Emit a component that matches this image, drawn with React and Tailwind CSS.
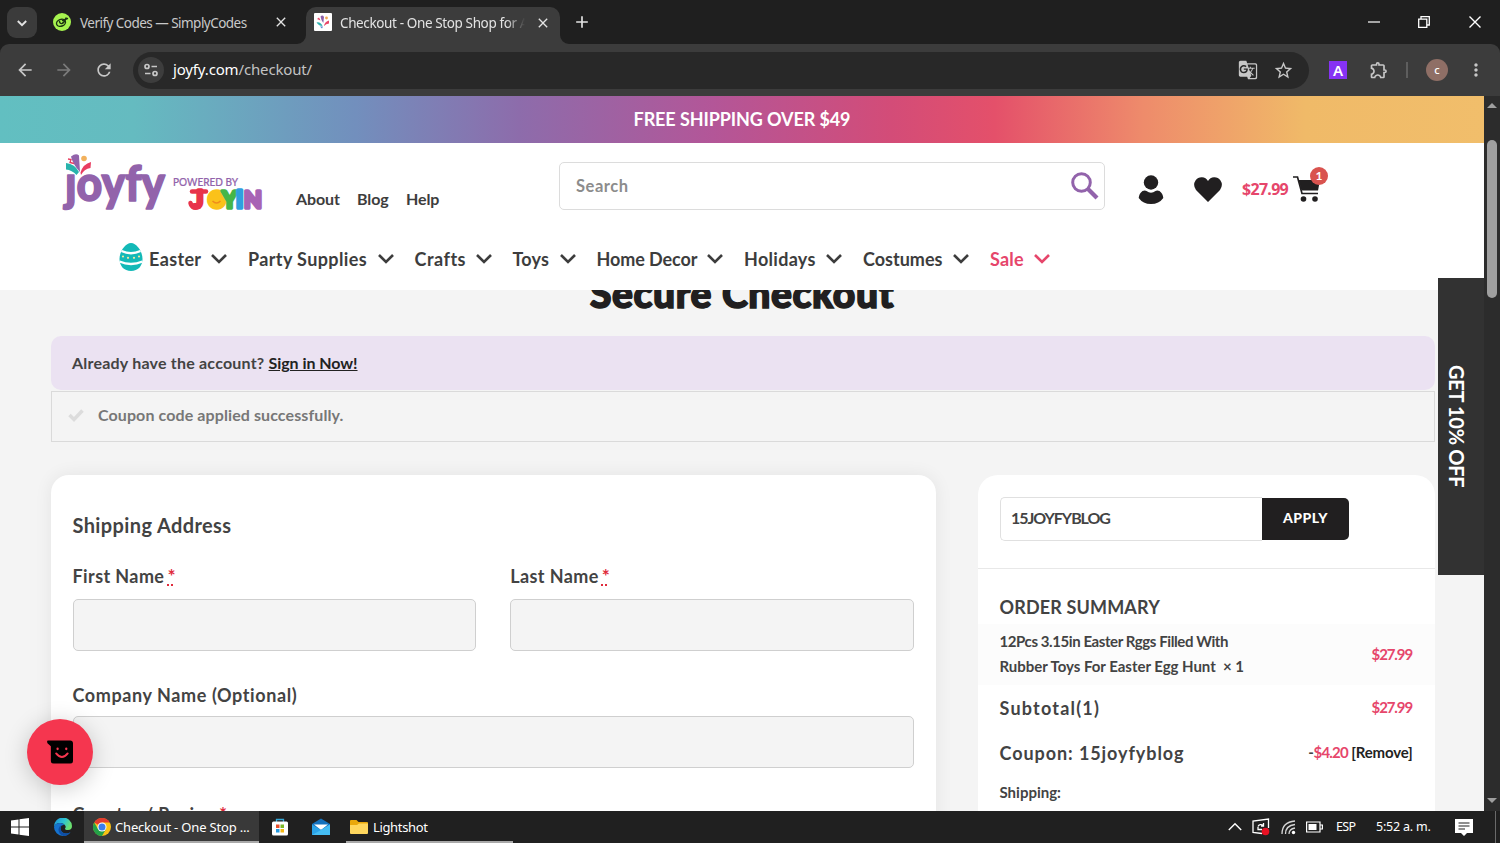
import React from 'react';
import {
  MdArrowBack,
  MdArrowForward,
  MdRefresh,
  MdGTranslate,
  MdStarBorder,
  MdOutlineExtension,
  MdMoreVert,
  MdClose,
  MdAdd,
} from 'react-icons/md';

const menuItems = [
  { label: 'Easter', width: 'w-[52px] tracking-[0.35px]' },
  { label: 'Party Supplies', width: 'w-[119.5px] tracking-[0.38px]' },
  { label: 'Crafts', width: 'w-[51px] tracking-[0.5px]' },
  { label: 'Toys', width: 'w-[37px] tracking-[0.2px]' },
  { label: 'Home Decor', width: 'w-[100.5px] tracking-[-0.1px]' },
  { label: 'Holidays', width: 'w-[72px] tracking-[0.3px]' },
  { label: 'Costumes', width: 'w-[80px]' },
  { label: 'Sale', width: 'w-[34px] tracking-[0.2px]', sale: true },
];

const Chevron = () => (
  <svg className="w-4 h-4" viewBox="0 0 16 16" fill="none" stroke="currentColor" strokeWidth="2.6"><path d="M1 4L8 11L15 4" /></svg>
);

const SimplyCodesIcon = () => (
  <svg className="w-[18px] h-[18px]" viewBox="0 0 18 18">
    <circle cx="9" cy="9" r="9" fill="#a6f34f" />
    <g fill="none" stroke="#1c3312" strokeWidth="1.4" strokeLinecap="round">
      <ellipse cx="8" cy="9.8" rx="4.6" ry="3.4" transform="rotate(-20 8 9.8)" />
      <path d="M6.500 8.500Q7 11 9 10.500Q11.500 9.500 13 5M9.500 7.500L14.500 5.500" />
    </g>
  </svg>
);

const JoyfyFavicon = () => (
  <svg className="w-[18px] h-[18px]" viewBox="0 0 18 18">
    <rect width="18" height="18" rx="1" fill="#fff" />
    <path d="M6.500 3.500Q8.500 1.500 10 4L9.300 10Q7 7 6.500 3.500Z" fill="#8d5fa9" />
    <path d="M2.500 9.500Q6.500 8.500 8.500 13Q5 13 2.500 9.500Z" fill="#2fb3b0" />
    <path d="M10 12.500Q11 8.500 15 7.500L15 10.500Q12 10.500 10 13Z" fill="#e8476a" />
    <path d="M3 6l2-1.500 1.500 3z" fill="#e8476a" />
    <circle cx="12.500" cy="5" r="1.400" fill="#f0a851" />
    <path d="M6 13.500l3 0-1 2z" fill="#4a7fd0" />
  </svg>
);

const TabBar = () => (
  <div className="h-11 flex bg-[#1f1f1f] text-[#e3e3e3] text-[13.5px]">
    <div className="w-[30px] h-[31px] mt-[7px] ml-[7px] rounded-[9px] bg-[#3b3b3b] flex items-center justify-center">
      <svg className="w-3 h-3" viewBox="0 0 12 12" fill="none" stroke="currentColor" strokeWidth="1.9"><path d="M1.8 4L6 8.2L10.2 4" /></svg>
    </div>
    <div className="w-[269px] pl-4 flex items-center">
      <SimplyCodesIcon />
      <span className="ml-[9px] w-[193px] pt-[2px] whitespace-nowrap tracking-[-0.53px] text-[#c9c9c9]">Verify Codes — SimplyCodes</span>
      <MdClose className="w-4 h-4" />
    </div>
    <div className="relative w-[254px] mt-[7px] pl-2 flex items-center rounded-t-[10px] bg-[#3c3c3c]">
      <svg className="absolute -left-[9px] bottom-0 w-[9px] h-[9px]" viewBox="0 0 9 9"><path d="M9 0V9H0A9 9 0 0 0 9 0Z" fill="#3c3c3c" /></svg>
      <svg className="absolute -right-[9px] bottom-0 w-[9px] h-[9px]" viewBox="0 0 9 9"><path d="M0 0V9H9A9 9 0 0 1 0 0Z" fill="#3c3c3c" /></svg>
      <div className="-mt-[7px]"><JoyfyFavicon /></div>
      <div className="ml-2 -mt-[4px] w-[185px] overflow-hidden whitespace-nowrap tracking-[-0.38px] [mask-image:linear-gradient(to_right,black_90%,transparent)]">Checkout - One Stop Shop for A</div>
      <MdClose className="ml-[10px] -mt-[6px] w-4 h-4 shrink-0" />
    </div>
    <div className="ml-3 flex items-center"><MdAdd className="w-5 h-5" /></div>
    <div className="ml-auto mr-[19px] flex items-center gap-[39px] text-white">
      <svg className="w-3 h-3 -mr-[1px]" viewBox="0 0 12 12" stroke="currentColor" strokeWidth="1.2"><path d="M0 6H12" /></svg>
      <svg className="w-3 h-3" viewBox="0 0 12 12" fill="none" stroke="currentColor" strokeWidth="1.3"><path d="M.7 3.2H8.8V11.3H.7ZM3 3V.7H11.3V9H9" /></svg>
      <svg className="w-3 h-3" viewBox="0 0 12 12" stroke="currentColor" strokeWidth="1.4"><path d="M.5 .5L11.5 11.5M11.5 .5L.5 11.5" /></svg>
    </div>
  </div>
);

const Toolbar = () => (
  <div className="h-[52px] bg-[#1f1f1f]">
    <div className="h-full rounded-t-[9px] bg-[#3c3c3c] text-[#c7c7c7] flex items-center">
      <MdArrowBack className="ml-[15px] w-5 h-5" />
      <MdArrowForward className="ml-[19px] w-5 h-5 text-[#7b7b7b]" />
      <MdRefresh className="ml-5 w-5 h-5" />
      <div className="ml-[19px] w-[1176px] h-[37px] rounded-full bg-[#282828] flex items-center pl-[5px] pr-[15px]">
        <div className="w-[26px] h-[26px] rounded-full bg-[#3d3d3d] flex items-center justify-center">
          <svg className="w-4 h-4" viewBox="0 0 16 16" fill="none" stroke="currentColor" strokeWidth="1.7">
            <circle cx="4" cy="4.5" r="2" /><path d="M8.5 4.5H14M2 11.5H7.5" /><circle cx="12" cy="11.5" r="2" />
          </svg>
        </div>
        <div className="ml-[9px] -mt-[1px] text-[15px] tracking-[-0.15px] text-[#c3c3c3]"><span className="text-white">joyfy.com</span>/checkout/</div>
        <MdGTranslate className="ml-auto w-5 h-5" />
        <MdStarBorder className="ml-[15px] w-[21px] h-[21px]" />
      </div>
      <div className="ml-5 w-[18px] h-[18px] bg-[#8632f4] text-white text-[15px] leading-none font-semibold flex items-center justify-center">A</div>
      <MdOutlineExtension className="ml-[22px] w-5 h-5" />
      <div className="ml-[17px] w-[2px] h-4 bg-[#5e5e5e]" />
      <div className="ml-[18px] w-[22px] h-[22px] rounded-full bg-[#8f6f66] text-white text-[11px] font-medium flex items-center justify-center">c</div>
      <MdMoreVert className="ml-[18px] w-5 h-5" />
    </div>
  </div>
);

const Logo = () => (
  <svg className="w-[204px] h-16" viewBox="0 0 204 64">
    <g className="font-['Lato'] font-black" fill="#9263ab">
      <text x="4" y="48" fontSize="49" textLength="100" lengthAdjust="spacingAndGlyphs" stroke="#9263ab" strokeWidth="1.6" strokeLinejoin="round">joyfy</text>
    </g>
    {/* confetti burst takes the place of the dot on the j */}
    <rect x="0" y="0" width="30" height="21" fill="#fff" />
    <path d="M10 3.500Q15 -.5 18 2.500L19 19Q11.500 11 10 3.500Z" fill="#9263ab" />
    <path d="M5 10Q14 11 18 19L15.500 22Q11 17 5 16.500Z" fill="#28b3ac" />
    <path d="M19.500 19.500Q22 11 30 9L29.500 15Q23 16 20 22Z" fill="#e93d60" />
    <circle cx="23" cy="5.500" r="2.800" fill="#f2b15c" />
    <path d="M7 6l3 .5-1 3 4 1" fill="none" stroke="#e93d60" strokeWidth="1.300" />
    <text className="font-['Lato'] font-medium" x="112" y="32.500" fontSize="10.500" textLength="65" lengthAdjust="spacingAndGlyphs" fill="#9263ab" stroke="#9263ab" strokeWidth=".2">POWERED BY</text>
    <text className="font-['Lato'] font-black" y="55" fontSize="24" strokeWidth="3.400" strokeLinejoin="round">
      <tspan x="132" fill="#e8334a" stroke="#e8334a">J</tspan>
      <tspan x="147" fill="#fbc21a" stroke="#fbc21a" fontSize="22">O</tspan>
      <tspan x="161" fill="#45b649" stroke="#45b649" fontSize="23">Y</tspan>
      <tspan x="175" fill="#2f9fe0" stroke="#2f9fe0">I</tspan>
      <tspan x="183" fill="#a763b5" stroke="#a763b5" fontSize="23">N</tspan>
    </text>
    <path d="M129.500 50Q131 56.500 138 54" fill="none" stroke="#e8334a" strokeWidth="4.500" strokeLinecap="round" />
    <path d="M131 38.500H145" stroke="#e8334a" strokeWidth="4.500" strokeLinecap="round" />
    <circle cx="155.500" cy="47" r="6" fill="#fbc21a" />
    <path d="M151.500 48Q155.500 52 159.500 48" fill="none" stroke="#ef8d1c" strokeWidth="1.500" />
  </svg>
);

const SiteHeader = () => (
  <div className="relative z-10 h-[147px] shrink-0 bg-white text-[#3d3d3d] font-bold">
    <div className="h-[90px] pl-[61px] flex items-start">
      <div className="mt-[10px]"><Logo /></div>
      <div className="ml-[31px] mt-[44px] flex text-[16px] leading-6 tracking-[-0.1px]">
        <span className="w-[61px]">About</span>
        <span className="w-[49px]">Blog</span>
        <span>Help</span>
      </div>
      <div className="absolute left-[559px] top-[19px] w-[546px] h-12 border border-[#dcdcdc] rounded-[5px] flex items-center justify-between pl-[16px] pr-[5px]">
        <span className="pt-[1px] text-[16.5px] tracking-[0.55px] text-[#8c8c8c]">Search</span>
        <svg className="w-7 h-7" viewBox="0 0 28 28" fill="none" stroke="#9263ab"><circle cx="10.5" cy="10.5" r="8.8" strokeWidth="3" /><path d="M17 17L26 26" strokeWidth="4.2" /></svg>
      </div>
      <div className="absolute left-[1138px] top-[30px] flex items-center text-[#211f20]">
        <svg className="w-[26px] h-8" viewBox="0 0 26 32" fill="currentColor"><circle cx="13" cy="9.500" r="7.200" /><path d="M4.5 18Q7 17 8.5 18Q13 21.5 17.5 18Q19 17 21.5 18Q25 20.5 25.3 25Q21 31 13 31T.7 25Q1 20.5 4.5 18Z" /></svg>
        <svg className="ml-[30px] w-7 h-[25px]" viewBox="0 0 28 25" fill="currentColor"><path d="M14 25L2 13Q-1.5 8 1.5 3.5Q4 0 8 .2Q12 .5 14 4Q16 .5 20 .2Q24 0 26.5 3.5Q29.500 8 26 13Z" /></svg>
        <span className="ml-5 w-[50px] whitespace-nowrap text-[16px] tracking-[-0.7px] font-['Noto_Sans'] text-[#e6466b]">$27.99</span>
        <span className="relative ml-[1px]">
          <svg className="w-7 h-7" viewBox="0 0 28 28" fill="none" stroke="currentColor">
            <path d="M0 2H4.5L9 18.5H25" strokeWidth="1.7" /><path d="M5.500 5H27L25 15.5H8.500Z" fill="currentColor" stroke="none" />
            <circle cx="10.500" cy="24" r="2.800" fill="currentColor" stroke="none" /><circle cx="22" cy="24" r="2.800" fill="currentColor" stroke="none" />
          </svg>
          <span className="absolute left-[17px] -top-[8px] w-[18px] h-[18px] rounded-full bg-[#d9534f] text-white text-[12px] leading-[18px] text-center">1</span>
        </span>
      </div>
    </div>
    <div className="h-[52px] pl-[119px] flex items-center text-[18px]">
      <svg className="w-6 h-7 mr-[6px] -mt-[4px]" viewBox="0 0 24 28">
        <path d="M12 0C18 0 23.500 9 23.500 16C23.500 23 19 28 12 28S.5 23 .5 16C.5 9 6 0 12 0Z" fill="#13b9b7" />
        <path d="M2.500 8Q12 12.500 21.500 8M.5 18.500Q12 23.500 23.500 18.500" fill="none" stroke="#fff" strokeWidth="2.400" />
        <g fill="#f5e7a0"><circle cx="4" cy="13.500" r="1.100" /><circle cx="9" cy="14.800" r="1.100" /><circle cx="15" cy="14.800" r="1.100" /><circle cx="20" cy="13.500" r="1.100" /></g>
      </svg>
      {menuItems.map((item) => (
        <div key={item.label} className={`flex items-center gap-[10px] mr-[21px] ${item.sale ? 'text-[#e6466b]' : ''}`}>
          <span className={`whitespace-nowrap ${item.width}`}>{item.label}</span>
          <Chevron />
        </div>
      ))}
    </div>
  </div>
);

const Required = () => <span className="ml-[3px] text-[19px] leading-none tracking-[-0.5px] text-[#e02b3c] underline decoration-dotted decoration-2 underline-offset-1">*</span>;

const Field = ({ label, required, labelClass }) => (
  <div className="flex-1">
    <label className={`block h-[25px] text-[18px] whitespace-nowrap ${labelClass}`}>{label}{required && <Required />}</label>
    <div className="mt-[9px] h-[52px] rounded-[5px] border border-[#cfcfcf] bg-[#f4f4f4]" />
  </div>
);

const ShippingForm = () => (
  <div className="w-[885px] h-[400px] pl-[21.5px] pr-[22px] pt-[35px] rounded-t-[18px] bg-white shadow-[0_0_18px_rgba(0,0,0,0.07)]">
    <h3 className="h-[30px] leading-[31px] text-[20px] tracking-[0.38px]">Shipping Address</h3>
    <div className="mt-[25px] flex gap-[34px]">
      <Field label="First Name" labelClass="leading-[23px] tracking-[0.4px]" required />
      <Field label="Last Name" labelClass="leading-[23px] tracking-[0.4px]" required />
    </div>
    <div className="mt-[31px]"><Field label="Company Name (Optional)" labelClass="leading-[26px] tracking-[0.6px]" /></div>
    <label className="mt-[34px] block h-[25px] leading-[25px] text-[18px] tracking-[0.4px]">Country / Region<Required /></label>
  </div>
);

const OrderSummary = () => (
  <div className="w-[457px] h-[400px] rounded-t-[20px] bg-white text-[15px]">
    <div className="h-[94px] pl-[22px] pt-[22px] flex border-b border-[#e8e8e8]">
      <div className="w-[262px] h-11 pl-[10px] pb-[2px] border border-r-0 border-[#e0e0e0] rounded-l-[5px] flex items-center text-[16px] tracking-[-1.05px]">15JOYFYBLOG</div>
      <button className="w-[87px] h-[42px] mt-[1px] pb-[3px] rounded-r-[5px] bg-[#211f20] text-white text-[14px] font-black tracking-[0.5px]">APPLY</button>
    </div>
    <h3 className="h-[55px] pt-[25px] pl-[21.5px] leading-[27px] text-[18px] tracking-[0.15px]">ORDER SUMMARY</h3>
    <div className="h-[61px] pl-[21.5px] pr-[23px] flex items-center justify-between bg-[#fcfcfc]">
      <div className="-mt-[2px] leading-[25px] whitespace-nowrap tracking-[-0.42px]">12Pcs 3.15in Easter Rggs Filled With<br /><span className="tracking-[-0.03px]">Rubber Toys For Easter Egg Hunt &nbsp;× 1</span></div>
      <span className="-mt-[1px] text-[#e6466b] tracking-[-1.1px]">$27.99</span>
    </div>
    <div className="h-[45px] pl-[21.5px] pr-[23px] flex items-center justify-between">
      <span className="pt-[1px] text-[18px] tracking-[1.2px]">Subtotal(1)</span>
      <span className="-mt-[1px] text-[#e6466b] tracking-[-1.1px]">$27.99</span>
    </div>
    <div className="h-[45px] pl-[21.5px] pr-[22.5px] flex items-center justify-between">
      <span className="pt-[1px] text-[18px] tracking-[0.93px]">Coupon: 15joyfyblog</span>
      <span className="-mt-[1px] tracking-[-0.2px]">-<span className="text-[#e6466b] tracking-[-0.8px]">$4.20</span> <span className="text-[#222]">[Remove]</span></span>
    </div>
    <div className="h-[34px] pl-[21.5px] flex items-center">Shipping:</div>
  </div>
);

const CheckoutPage = () => (
  <div className="relative w-[1484px] h-full overflow-hidden flex flex-col bg-[#f4f4f4] font-['Lato',sans-serif] font-bold text-[#434343]">
    <div className="h-[47px] shrink-0 flex items-center justify-center text-white text-[18px] tracking-[-0.1px] bg-[linear-gradient(90deg,#62bfc1_0%,#65bbc0_9%,#728fbd_24%,#8d6cab_35%,#b35698_48%,#d34c78_60%,#e4506a_67%,#ee8b6b_77%,#f0ba68_88%,#f1be6b_100%)]">FREE SHIPPING OVER $49</div>
    <SiteHeader />
    <h1 className="-mt-[22px] h-[52px] shrink-0 text-center text-[39px] leading-[51px] tracking-[0.6px] font-black text-[#211f20] [-webkit-text-stroke:1.6px_#211f20]">Secure Checkout</h1>
    <div className="mt-4 mx-[51px] w-[1384px] shrink-0">
      <div className="h-[54px] pl-[21px] rounded-[10px] bg-[#ebe2f2] flex items-center text-[16px] tracking-[0.21px] whitespace-pre">Already have the account? <span className="text-[#222] tracking-[-0.05px] underline">Sign in Now!</span></div>
      <div className="mt-[1px] h-[51px] pl-[16px] pb-[3px] border border-[#dadada] flex items-center text-[16px] tracking-[0.1px] text-[#777]">
        <svg className="w-4 h-4 mr-[14px]" viewBox="0 0 16 16" fill="none" stroke="#dcdcdc" strokeWidth="3.500"><path d="M1.500 8L6 12.500L14.500 3.500" /></svg>
        Coupon code applied successfully.
      </div>
      <div className="mt-[33px] flex justify-between">
        <ShippingForm />
        <OrderSummary />
      </div>
    </div>

    {/* Floating promo tab */}
    <div className="absolute z-20 right-0 top-[182px] w-[46px] h-[297px] bg-[#323232] text-white text-[20px] tracking-[-0.3px] flex items-center justify-center pr-[9px] [writing-mode:vertical-rl]">GET 10% OFF</div>

    {/* Chat bubble */}
    <div className="absolute z-20 left-[27px] top-[623px] w-[66px] h-[66px] rounded-full bg-[#f5364f] shadow-[0_4px_24px_rgba(0,0,0,0.2)] flex items-center justify-center">
      <svg className="w-[26px] h-6" viewBox="0 0 27 24"><path d="M1 0H24Q27 0 27 3V21Q27 24 24 24H7Q4 24 4 21V6L.5 3Q-.5 0 1 0Z" fill="#000" /><g fill="none" stroke="#f5364f" strokeWidth="2" strokeLinecap="round"><path d="M9.500 13.500Q15.500 21 21.500 13.500" /><path d="M11 8.500V9M20 8.500V9" strokeWidth="2.400" /></g></svg>
    </div>
  </div>
);

const Scrollbar = () => (
  <div className="w-4 h-full bg-[#2c2c2c] flex flex-col items-center">
    <svg className="mt-[7px] w-[10px] h-[5px]" viewBox="0 0 10 5"><path d="M5 0L10 5H0Z" fill="#9f9f9f" /></svg>
    <div className="mt-8 w-[10px] h-[158px] rounded-full bg-[#9f9f9f]" />
    <svg className="mt-auto mb-2 w-[10px] h-[5px]" viewBox="0 0 10 5"><path d="M0 0H10L5 5Z" fill="#9f9f9f" /></svg>
  </div>
);

const Taskbar = () => (
  <div className="h-8 flex items-center bg-[#202020] text-white text-[13px]">
    <svg className="ml-[11px] w-[18px] h-[18px]" viewBox="0 0 18 18" fill="currentColor"><path d="M0 2.500L7.500 1.500V8.500H0ZM8.500 1.300L18 0V8.500H8.500ZM0 9.500H7.500V16.500L0 15.500ZM8.500 9.500H18V18L8.500 16.700Z" /></svg>
    <svg className="ml-[25px] w-[18px] h-[18px]" viewBox="0 0 18 18">
      <defs>
        <linearGradient id="edgeTop" x1="0" y1="0" x2="1" y2=".4"><stop offset="0" stopColor="#1a8fe0" /><stop offset=".6" stopColor="#2fc6d0" /><stop offset="1" stopColor="#6be06f" /></linearGradient>
      </defs>
      <path d="M0 9A9 9 0 0 1 18 8Q18 12 14 12Q11 12 11 10.500Q12 9.500 11.500 8Q10 5 6 5Q1.500 5 0 9Z" fill="url(#edgeTop)" />
      <path d="M0 9Q1.500 5 6 5Q9 5 10.500 7Q7 6.500 6.500 10Q6.500 15 12 15.500Q15 15.500 16.500 14Q14 18 9 18A9 9 0 0 1 0 9Z" fill="#1573cf" />
      <path d="M6.500 10Q6.500 15 12 15.500Q15 15.500 16.500 14Q14 18 9.500 18Q4 16 4.500 11Q5 8 8 6.800Q6.500 8 6.500 10Z" fill="#0f4fa6" />
    </svg>
    <div className="ml-3 w-[175px] h-full pl-[9px] flex items-center bg-[#393939] shadow-[inset_0_-2px_0_#a9a9a9] whitespace-nowrap">
      <svg className="w-[18px] h-[18px] mr-[4px] shrink-0" viewBox="0 0 18 18">
        <circle cx="9" cy="9" r="9" fill="#fbc116" />
        <path d="M9 9L1.200 4.500A9 9 0 0 1 16.800 4.500H9Z" fill="#e33b2e" />
        <path d="M9 9L5.100 11.300L1.200 4.500A9 9 0 0 0 9 18L12.900 11.300Z" fill="#24a148" />
        <circle cx="9" cy="9" r="4.500" fill="#fff" /><circle cx="9" cy="9" r="3.500" fill="#3b7ded" />
      </svg>
      <span className="pt-[1px] tracking-[-0.18px]">Checkout - One Stop ...</span>
    </div>
    <svg className="ml-[13px] w-4 h-[18px]" viewBox="0 0 16 18"><path d="M4.500 4V1.500H11.500V4" fill="none" stroke="#35a8d8" strokeWidth="1.300" /><rect y="3.500" width="16" height="14" rx="1.500" fill="#fff" /><path d="M4 6.500h3.500v3.500H4z" fill="#e8502d" /><path d="M8.500 6.500H12v3.500H8.500z" fill="#7db928" /><path d="M4 11h3.500v3.500H4z" fill="#2299e0" /><path d="M8.500 11H12v3.500H8.500z" fill="#f5b812" /></svg>
    <svg className="ml-6 w-[18px] h-[18px]" viewBox="0 0 18 18"><path d="M0 6L9 .5L18 6V17H0Z" fill="#1471bd" /><path d="M2 6.500H16L9 12Z" fill="#fff" /><path d="M0 6.500L9 12L18 6.500V17H0Z" fill="#2ba3e8" /><path d="M0 17L9 12L18 6.500V17Z" fill="#45bdf3" /></svg>
    <div className="ml-4 w-[167px] h-full pl-1 flex items-center shadow-[inset_0_-2px_0_#a9a9a9]">
      <svg className="w-[18px] h-4 mr-[5px]" viewBox="0 0 18 16"><path d="M0 2Q0 1 1 1H6.500L8.500 3H17Q18 3 18 4V8H0Z" fill="#e9a80c" /><path d="M0 6H7L9 4.500H18V14Q18 15 17 15H1Q0 15 0 14Z" fill="#ffd75e" /></svg>
      <span className="pt-[1px] tracking-[-0.35px]">Lightshot</span>
    </div>
    <div className="ml-auto flex items-center">
      <svg className="w-[14px] h-[14px]" viewBox="0 0 14 14" fill="none" stroke="currentColor" strokeWidth="1.400"><path d="M.8 10L7 3.800L13.200 10" /></svg>
      <svg className="ml-[10px] w-[18px] h-[18px]" viewBox="0 0 18 18" fill="none" stroke="#fff" strokeWidth="1.300"><path d="M10 15.500L1 14.500V3L16.500 1V10" /><path d="M6 8.500A3 3 0 0 1 11 7.500M11.500 5V8H9M10 11.500H6V9" /><circle cx="13.500" cy="13.500" r="3.800" fill="#e81123" stroke="none" /></svg>
      <svg className="ml-[11px] w-[15px] h-[15px]" viewBox="0 0 15 15" fill="none" stroke="#d5d5d5" strokeWidth="1.300"><path d="M1 14Q1 2 14 1M4.500 14Q4.500 5.500 14 4.500M8 14Q8 9 14 8" /><circle cx="12.500" cy="12.500" r="1.700" fill="#fff" stroke="none" /></svg>
      <svg className="ml-[10px] w-[17px] h-3" viewBox="0 0 17 12"><path d="M.6 1H14V11H.6ZM14 4H16.400V8H14" fill="none" stroke="#fff" strokeWidth="1.200" /><path d="M2.500 3H10.500V9H2.500Z" fill="#fff" /></svg>
      <span className="ml-[13px] w-5 pt-[1px] text-[12.500px] tracking-[-0.6px]">ESP</span>
      <span className="ml-5 w-[56px] pt-[1px] whitespace-nowrap text-[12.500px] tracking-[-0.2px]">5:52 a. m.</span>
      <svg className="ml-[23px] w-[18px] h-[17px]" viewBox="0 0 18 17"><path d="M0 0H18V14H12L9 17L6 14H0Z" fill="#fff" /><path d="M3.500 4H14.500M3.500 7H14.500M3.500 10H10" stroke="#202020" strokeWidth="1.100" /></svg>
      <div className="ml-[22px] mr-1 w-px h-8 bg-[#6a6a6a]" />
    </div>
  </div>
);

const App = () => {
  return (
    <div className="w-[1500px] h-[843px] overflow-hidden flex flex-col font-['Noto_Sans',sans-serif]">
      <TabBar />
      <Toolbar />
      <div className="h-[715px] flex">
        <CheckoutPage />
        <Scrollbar />
      </div>
      <Taskbar />
    </div>
  );
};

export default App;
